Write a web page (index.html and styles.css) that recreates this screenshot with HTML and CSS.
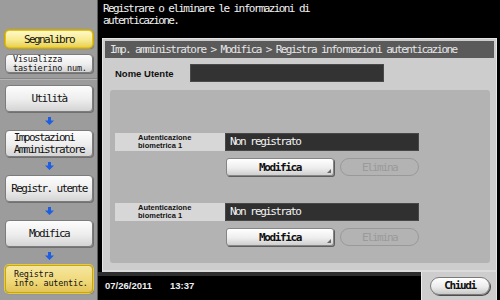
FILE: index.html
```html
<!DOCTYPE html>
<html lang="it">
<head>
    <meta charset="UTF-8">
    <meta name="viewport" content="width=device-width, initial-scale=1.0">
    <title>Registra informazioni autenticazione</title>
    <link rel="stylesheet" href="styles.css">
</head>
<body>
    <div class="screen">
        <aside class="sidebar">
            <div class="side-top">
                <button class="side-btn bookmark">Segnalibro</button>
                <button class="side-btn side-small">Visualizza<br>tastierino num.</button>
            </div>
            <div class="side-path">
                <button class="side-btn">Utilità</button>
                <span class="arrow"><svg width="9" height="8" viewBox="0 0 9 8"><path d="M3 0h3v3.5h3L4.5 8 0 3.5h3z" fill="#1d5fe0"/></svg></span>
                <button class="side-btn two-line"><span>Impostazioni<br>Amministratore</span></button>
                <span class="arrow"><svg width="9" height="8" viewBox="0 0 9 8"><path d="M3 0h3v3.5h3L4.5 8 0 3.5h3z" fill="#1d5fe0"/></svg></span>
                <button class="side-btn">Registr. utente</button>
                <span class="arrow"><svg width="9" height="8" viewBox="0 0 9 8"><path d="M3 0h3v3.5h3L4.5 8 0 3.5h3z" fill="#1d5fe0"/></svg></span>
                <button class="side-btn">Modifica</button>
                <span class="arrow"><svg width="9" height="8" viewBox="0 0 9 8"><path d="M3 0h3v3.5h3L4.5 8 0 3.5h3z" fill="#1d5fe0"/></svg></span>
                <button class="side-btn side-small current">Registra<br>info. autentic.</button>
            </div>
        </aside>

        <main class="main">
            <p class="message">Registrare o eliminare le informazioni di<br>autenticazione.</p>

            <section class="panel">
                <div class="panel-title">Imp. amministratore &gt; Modifica &gt; Registra informazioni autenticazione</div>
                <div class="user-row">
                    <span class="user-label">Nome Utente</span>
                    <div class="user-field"></div>
                </div>
                <div class="auth-area">
                    <div class="auth-block">
                        <div class="auth-row">
                            <div class="auth-label">Autenticazione<br>biometrica 1</div>
                            <div class="auth-value">Non registrato</div>
                        </div>
                        <div class="auth-actions">
                            <button class="key-btn">Modifica</button>
                            <button class="pill-btn" disabled>Elimina</button>
                        </div>
                    </div>
                    <div class="auth-block">
                        <div class="auth-row">
                            <div class="auth-label">Autenticazione<br>biometrica 1</div>
                            <div class="auth-value">Non registrato</div>
                        </div>
                        <div class="auth-actions">
                            <button class="key-btn">Modifica</button>
                            <button class="pill-btn" disabled>Elimina</button>
                        </div>
                    </div>
                </div>
            </section>

            <footer class="footer">
                <div class="status">
                    <span class="date">07/26/2011</span>
                    <span class="time">13:37</span>
                </div>
                <div class="close-tab">
                    <button class="close-btn">Chiudi</button>
                </div>
            </footer>
        </main>
    </div>
</body>
</html>
```

FILE: styles.css
```css
body {
    margin: 0;
    background: #000;
    font-family: "DejaVu Sans Mono", monospace;
}
button {
    font-family: "DejaVu Sans Mono", monospace;
    padding: 0;
    cursor: pointer;
}
.screen {
    display: flex;
    width: 500px;
    height: 300px;
    overflow: hidden;
}

/* sidebar */
.sidebar {
    width: 97px;
    background: #9c9c9c;
    border-right: 1px solid #5c5c5c;
    display: flex;
    flex-direction: column;
}
.side-top {
    display: flex;
    flex-direction: column;
    gap: 6px;
    padding: 30px 0 5px 5px;
    border-bottom: 1px solid #858585;
    box-shadow: 0 1px 0 #b4b4b4;
}
.side-path {
    display: flex;
    flex-direction: column;
    padding: 6px 0 0 5px;
}
.side-btn {
    width: 88px;
    height: 27px;
    display: flex;
    align-items: center;
    justify-content: center;
    text-align: left;
    font-size: 11px;
    letter-spacing: -1.6px;
    line-height: 11px;
    color: #111;
    border: 1px solid #7c7c7c;
    border-radius: 4px;
    background: linear-gradient(#fdfdfd, #ededed 55%, #d4d4d4);
    box-shadow: 1px 1px 0 #707070;
}
.side-btn.two-line {
    line-height: 12px;
}
.side-btn.bookmark {
    height: 18px;
    border: 1px solid #e2c21a;
    background: linear-gradient(#fff9c8, #f6e88a 60%, #e9d055);
    box-shadow: 0 0 0 1px #c9a80d, 1px 1px 1px #6a6a6a;
}
.side-small {
    height: 19px;
    justify-content: flex-start;
    padding-left: 7px;
    font-size: 8.5px;
    letter-spacing: -0.2px;
    line-height: 9px;
}
.side-btn.current {
    height: 28px;
    padding-left: 8px;
    border: 1px solid #c9a617;
    background: linear-gradient(#f6e7a0, #efd878 60%, #e3c458);
    box-shadow: 0 0 0 1px #e6cc3a, 1px 1px 1px #6a6a6a;
}
.arrow {
    height: 18px;
    width: 88px;
    display: flex;
    align-items: center;
    justify-content: center;
}

/* main area */
.main {
    flex: 1;
    display: flex;
    flex-direction: column;
}
.message {
    margin: 0;
    height: 38px;
    padding: 3px 0 0 5px;
    box-sizing: border-box;
    color: #f2f2f2;
    font-size: 11px;
    letter-spacing: -1.6px;
    line-height: 12px;
}
.panel {
    height: 234px;
    margin: 0 3px 0 4px;
    padding: 2px 2px 0;
    box-sizing: border-box;
    background: #cdcdcd;
    border: 1px solid #e4e4e4;
    border-bottom: 2px solid #dcdcdc;
}
.panel-title {
    height: 17px;
    background: #5a5a5a;
    color: #e6e6e6;
    font-size: 11px;
    letter-spacing: -1.6px;
    line-height: 17px;
    padding-left: 5px;
}
.user-row {
    display: flex;
    align-items: center;
    height: 18px;
    margin-top: 6px;
    padding-left: 10px;
}
.user-label {
    width: 75px;
    font-family: "Liberation Sans", Arial, sans-serif;
    font-weight: bold;
    font-size: 9.5px;
    color: #111;
}
.user-field {
    width: 194px;
    height: 18px;
    box-sizing: border-box;
    background: #333;
    border: 1px solid #4a4a4a;
}
.auth-area {
    height: 173px;
    margin: 8px 4px 0 5px;
    padding: 43px 0 0 5px;
    box-sizing: border-box;
    background: #b3b3b3;
    border-radius: 3px;
}
.auth-block + .auth-block {
    margin-top: 27px;
}
.auth-row {
    display: flex;
    height: 18px;
}
.auth-label {
    width: 110px;
    padding: 1px 0 0 23px;
    box-sizing: border-box;
    background: #d7d7d7;
    font-family: "Liberation Sans", Arial, sans-serif;
    font-weight: bold;
    font-size: 7.5px;
    line-height: 8px;
    color: #111;
}
.auth-value {
    width: 194px;
    box-sizing: border-box;
    padding-left: 4px;
    background: #303030;
    border: 1px solid #474747;
    color: #f4f4f4;
    font-size: 11px;
    letter-spacing: -1.6px;
    line-height: 16px;
}
.auth-actions {
    display: flex;
    gap: 6px;
    margin: 7px 0 0 111px;
}
.key-btn {
    position: relative;
    width: 108px;
    height: 18px;
    border: 1px solid #858585;
    border-radius: 3px;
    background: linear-gradient(#ffffff, #eeeeee 55%, #cfcfcf);
    box-shadow: 1px 1px 0 #5e5e5e;
    color: #111;
    font-size: 11px;
    font-weight: bold;
    letter-spacing: -1.4px;
}
.key-btn::after {
    content: "";
    position: absolute;
    right: 2px;
    bottom: 2px;
    border-left: 4px solid transparent;
    border-bottom: 4px solid #6a6a6a;
}
.pill-btn {
    width: 79px;
    height: 18px;
    border: 1px solid #999;
    border-radius: 9px;
    background: transparent;
    color: #9a9a9a;
    font-size: 11px;
    letter-spacing: -1.6px;
}

/* footer */
.footer {
    flex: 1;
    display: flex;
}
.status {
    flex: 1;
    display: flex;
    gap: 18px;
    padding: 4px 0 0 7px;
    border-top: 4px solid #2e2e2e;
    color: #eee;
    font-family: "Liberation Sans", Arial, sans-serif;
    font-size: 9.5px;
    font-weight: bold;
}
.close-tab {
    width: 76px;
    margin-right: 3px;
    padding: 2px 0 0 8px;
    box-sizing: border-box;
    background: #cdcdcd;
    border-left: 1px solid #ececec;
    border-right: 1px solid #e4e4e4;
}
.close-btn {
    width: 60px;
    height: 18px;
    border: 1px solid #7a7a7a;
    border-radius: 9px;
    background: linear-gradient(#ffffff, #ececec 55%, #c9c9c9);
    box-shadow: 1px 1px 0 #4e4e4e;
    color: #111;
    font-size: 11px;
    font-weight: bold;
    letter-spacing: -1.4px;
}
```
